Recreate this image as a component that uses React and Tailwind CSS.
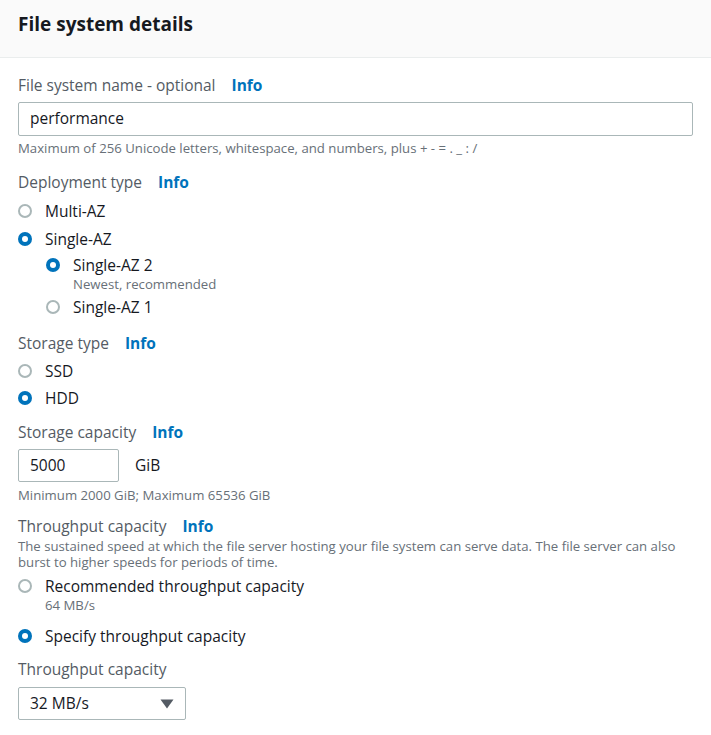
import React from "react";

const font = { fontFamily: '"Open Sans", "Noto Sans", sans-serif' };

function Info() {
  return <span className="ml-[16px] font-bold text-[#0073bb]">Info</span>;
}

function Radio({ checked }) {
  return checked ? (
    <span className="box-border flex h-[14px] w-[14px] shrink-0 items-center justify-center rounded-full bg-[#0073bb]">
      <span className="h-[6px] w-[6px] rounded-full bg-white" />
    </span>
  ) : (
    <span className="box-border h-[14px] w-[14px] shrink-0 rounded-full border-2 border-[#aab7b8] bg-white" />
  );
}

function RadioRow({ checked, label, desc, className = "" }) {
  return (
    <div className={"flex flex-col " + className}>
      <div className="flex h-[22px] items-center">
        <Radio checked={checked} />
        <span className="ml-[13px] text-[15.5px] leading-[22px] text-[#16191f]">{label}</span>
      </div>
      {desc && (
        <div className="ml-[27px] text-[13.2px] leading-[16px] text-[#687078]">{desc}</div>
      )}
    </div>
  );
}

function Label({ children, className = "" }) {
  return (
    <div className={"text-[15.5px] leading-[22px] text-[#545b64] " + className}>{children}</div>
  );
}

function Hint({ children, className = "" }) {
  return <div className={"text-[13.2px] leading-[16px] text-[#687078] " + className}>{children}</div>;
}

export default function App() {
  return (
    <div className="min-h-[735px] w-[711px] bg-white" style={font}>
      <div className="flex h-[58px] items-center border-b border-[#eaeded] bg-[#fafafa] px-[18px] pb-[10px]">
        <h2 className="text-[19px] font-bold leading-[24px] text-[#16191f]">File system details</h2>
      </div>
      <div className="flex flex-col px-[18px] pt-[16px]">
        <Label>
          File system name - optional
          <Info />
        </Label>
        <div className="mt-[6px] box-border flex h-[34px] items-center rounded-[2px] border border-[#aab7b8] px-[11px] text-[15.5px] text-[#16191f]">
          performance
        </div>
        <Hint className="mt-[4px]">Maximum of 256 Unicode letters, whitespace, and numbers, plus + - = . _ : /</Hint>

        <Label className="mt-[15px]">
          Deployment type
          <Info />
        </Label>
        <RadioRow className="mt-[7px]" label="Multi-AZ" />
        <RadioRow className="mt-[6px]" checked label="Single-AZ" />
        <div className="ml-[28px] flex flex-col">
          <RadioRow className="mt-[4px]" checked label="Single-AZ 2" desc="Newest, recommended" />
          <RadioRow className="mt-[4px]" label="Single-AZ 1" />
        </div>

        <Label className="mt-[14px]">
          Storage type
          <Info />
        </Label>
        <RadioRow className="mt-[6px]" label="SSD" />
        <RadioRow className="mt-[5px]" checked label="HDD" />

        <Label className="mt-[12px]">
          Storage capacity
          <Info />
        </Label>
        <div className="mt-[6px] flex items-center">
          <div className="box-border flex h-[33px] w-[101px] items-center rounded-[2px] border border-[#aab7b8] px-[11px] text-[15.5px] text-[#16191f]">
            5000
          </div>
          <span className="ml-[16px] text-[15.5px] text-[#16191f]">GiB</span>
        </div>
        <Hint className="mt-[5px]">Minimum 2000 GiB; Maximum 65536 GiB</Hint>

        <Label className="mt-[12px]">
          Throughput capacity
          <Info />
        </Label>
        <Hint className="mt-[1px]">
          The sustained speed at which the file server hosting your file system can serve data. The file server can also burst to higher speeds for periods of time.
        </Hint>
        <RadioRow className="mt-[5px]" label="Recommended throughput capacity" desc="64 MB/s" />
        <RadioRow className="mt-[12px]" checked label="Specify throughput capacity" />

        <Label className="mt-[11px]">Throughput capacity</Label>
        <div className="mt-[7px] box-border flex h-[33px] w-[168px] items-center justify-between rounded-[2px] border border-[#aab7b8] pl-[11px] pr-[11px] text-[15.5px] text-[#16191f]">
          <span>32 MB/s</span>
          <svg width="14" height="10" viewBox="0 0 14 10">
            <path d="M0.5 0.5 L13.5 0.5 L7 9.5 Z" fill="#545b64" />
          </svg>
        </div>
      </div>
    </div>
  );
}
